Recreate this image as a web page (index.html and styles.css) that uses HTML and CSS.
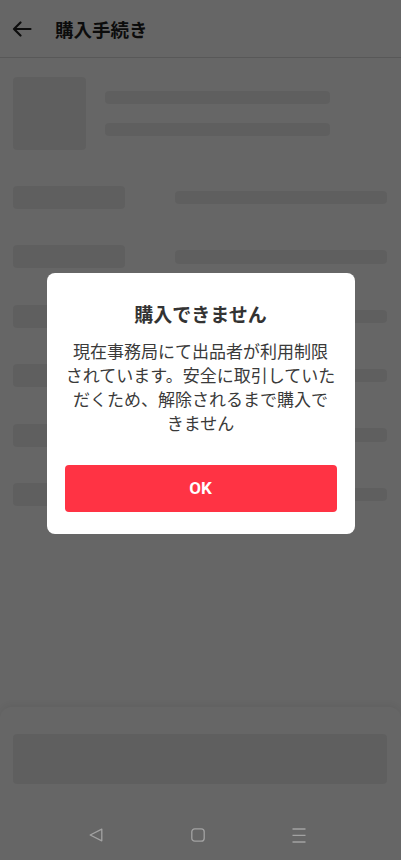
FILE: index.html
```html
<!DOCTYPE html>
<html lang="ja">
<head>
<meta charset="utf-8">
<meta name="viewport" content="width=device-width, initial-scale=1">
<title>購入手続き</title>
<link rel="stylesheet" href="styles.css">
</head>
<body>
<div class="page">
  <header class="header">
    <svg class="back" width="20" height="16" viewBox="0 0 20 16" aria-hidden="true">
      <path d="M18.5 8H2M8.5 1.5L2 8l6.5 6.5" fill="none" stroke="#222" stroke-width="2.2" stroke-linecap="round" stroke-linejoin="round"/>
    </svg>
    <h1 class="header-title">購入手続き</h1>
  </header>

  <main class="main">
    <div class="product">
      <div class="sk sk-thumb"></div>
      <div class="product-lines">
        <div class="sk sk-line"></div>
        <div class="sk sk-line"></div>
      </div>
    </div>
    <div class="rows">
      <div class="row"><div class="sk sk-label"></div><div class="sk sk-value"></div></div>
      <div class="row"><div class="sk sk-label"></div><div class="sk sk-value"></div></div>
      <div class="row"><div class="sk sk-label"></div><div class="sk sk-value"></div></div>
      <div class="row"><div class="sk sk-label"></div><div class="sk sk-value"></div></div>
      <div class="row"><div class="sk sk-label"></div><div class="sk sk-value"></div></div>
      <div class="row"><div class="sk sk-label"></div><div class="sk sk-value"></div></div>
    </div>
  </main>

  <footer class="sheet">
    <div class="sk sk-button"></div>
  </footer>

  <nav class="navbar">
    <svg width="14" height="14" viewBox="0 0 14 14" aria-hidden="true">
      <path d="M12.8 1.2L1.2 7l11.6 5.8z" fill="none" stroke="#a2a2a2" stroke-width="1.3" stroke-linejoin="round"/>
    </svg>
    <svg width="14" height="14" viewBox="0 0 14 14" aria-hidden="true">
      <rect x="0.8" y="0.8" width="12.4" height="12.4" rx="3" fill="none" stroke="#a2a2a2" stroke-width="1.3"/>
    </svg>
    <svg width="14" height="15" viewBox="0 0 14 15" aria-hidden="true">
      <path d="M0.5 1h13M0.5 7.3h13M0.5 14h13" fill="none" stroke="#a2a2a2" stroke-width="1.3"/>
    </svg>
  </nav>
</div>

<div class="overlay">
  <div class="dialog" role="alertdialog">
    <h2 class="dialog-title">購入できません</h2>
    <p class="dialog-body">現在事務局にて出品者が利用制限<br>されています。安全に取引していた<br>だくため、解除されるまで購入で<br>きません</p>
    <button class="dialog-ok" type="button">OK</button>
  </div>
</div>
</body>
</html>
```

FILE: styles.css
```css
* {
  box-sizing: border-box;
}

html, body {
  margin: 0;
  padding: 0;
}

body {
  font-family: "Noto Sans CJK JP", "Noto Sans", sans-serif;
  background: #ffffff;
  color: #222;
  width: 401px;
  height: 860px;
  overflow: hidden;
}

.page {
  display: flex;
  flex-direction: column;
  height: 860px;
}

.header {
  height: 58px;
  flex: none;
  display: flex;
  align-items: center;
  padding-left: 12px;
  border-bottom: 1px solid #dcdcdc;
}

.back {
  display: block;
  margin-top: 1px;
}

.header-title {
  margin: 0 0 0 23px;
  font-size: 18.5px;
  font-weight: 700;
  line-height: 24px;
  color: #1e1e1e;
}

.main {
  flex: 1;
  padding: 19px 14px 0 13px;
}

.sk {
  background: #eeeeee;
  border-radius: 4px;
}

.product {
  display: flex;
  gap: 19px;
}

.sk-thumb {
  width: 73px;
  height: 73px;
  flex: none;
}

.product-lines {
  display: flex;
  flex-direction: column;
  gap: 18.5px;
  padding-top: 14px;
}

.sk-line {
  width: 225px;
  height: 13px;
}

.rows {
  display: flex;
  flex-direction: column;
  gap: 36.4px;
  margin-top: 36px;
}

.row {
  display: flex;
  align-items: center;
  gap: 50px;
  height: 23px;
}

.sk-label {
  width: 112px;
  height: 23px;
}

.sk-value {
  flex: 1;
  height: 13.5px;
}

.sheet {
  flex: none;
  height: 100px;
  padding: 27px 14px 0 13px;
  border-radius: 12px 12px 0 0;
  box-shadow: 0 -2px 8px rgba(0, 0, 0, 0.07);
}

.sk-button {
  height: 50px;
}

.navbar {
  flex: none;
  height: 53px;
  display: flex;
  align-items: center;
  gap: 87.5px;
  padding-left: 89px;
  padding-top: 3px;
  background: #666666;
  position: relative;
  z-index: 2;
}

.navbar svg {
  display: block;
}

.overlay {
  position: fixed;
  inset: 0;
  z-index: 1;
  background: rgba(0, 0, 0, 0.6);
  display: flex;
  align-items: center;
  justify-content: center;
  padding-bottom: 53px;
}

.dialog {
  width: 308px;
  background: #ffffff;
  border-radius: 8px;
  padding: 29px 18px 22px;
  text-align: center;
}

.dialog-title {
  margin: 0;
  font-size: 19px;
  font-weight: 700;
  line-height: 24px;
  color: #333;
}

.dialog-body {
  margin: 13px -4px 0;
  font-size: 17px;
  line-height: 24px;
  color: #3a3a3a;
  white-space: nowrap;
}

.dialog-ok {
  display: block;
  width: 100%;
  height: 47px;
  margin-top: 29.5px;
  border: none;
  border-radius: 4px;
  background: #ff3344;
  color: #ffffff;
  font-family: Roboto, "Noto Sans", sans-serif;
  font-size: 17px;
  font-weight: 700;
  cursor: pointer;
}
```
